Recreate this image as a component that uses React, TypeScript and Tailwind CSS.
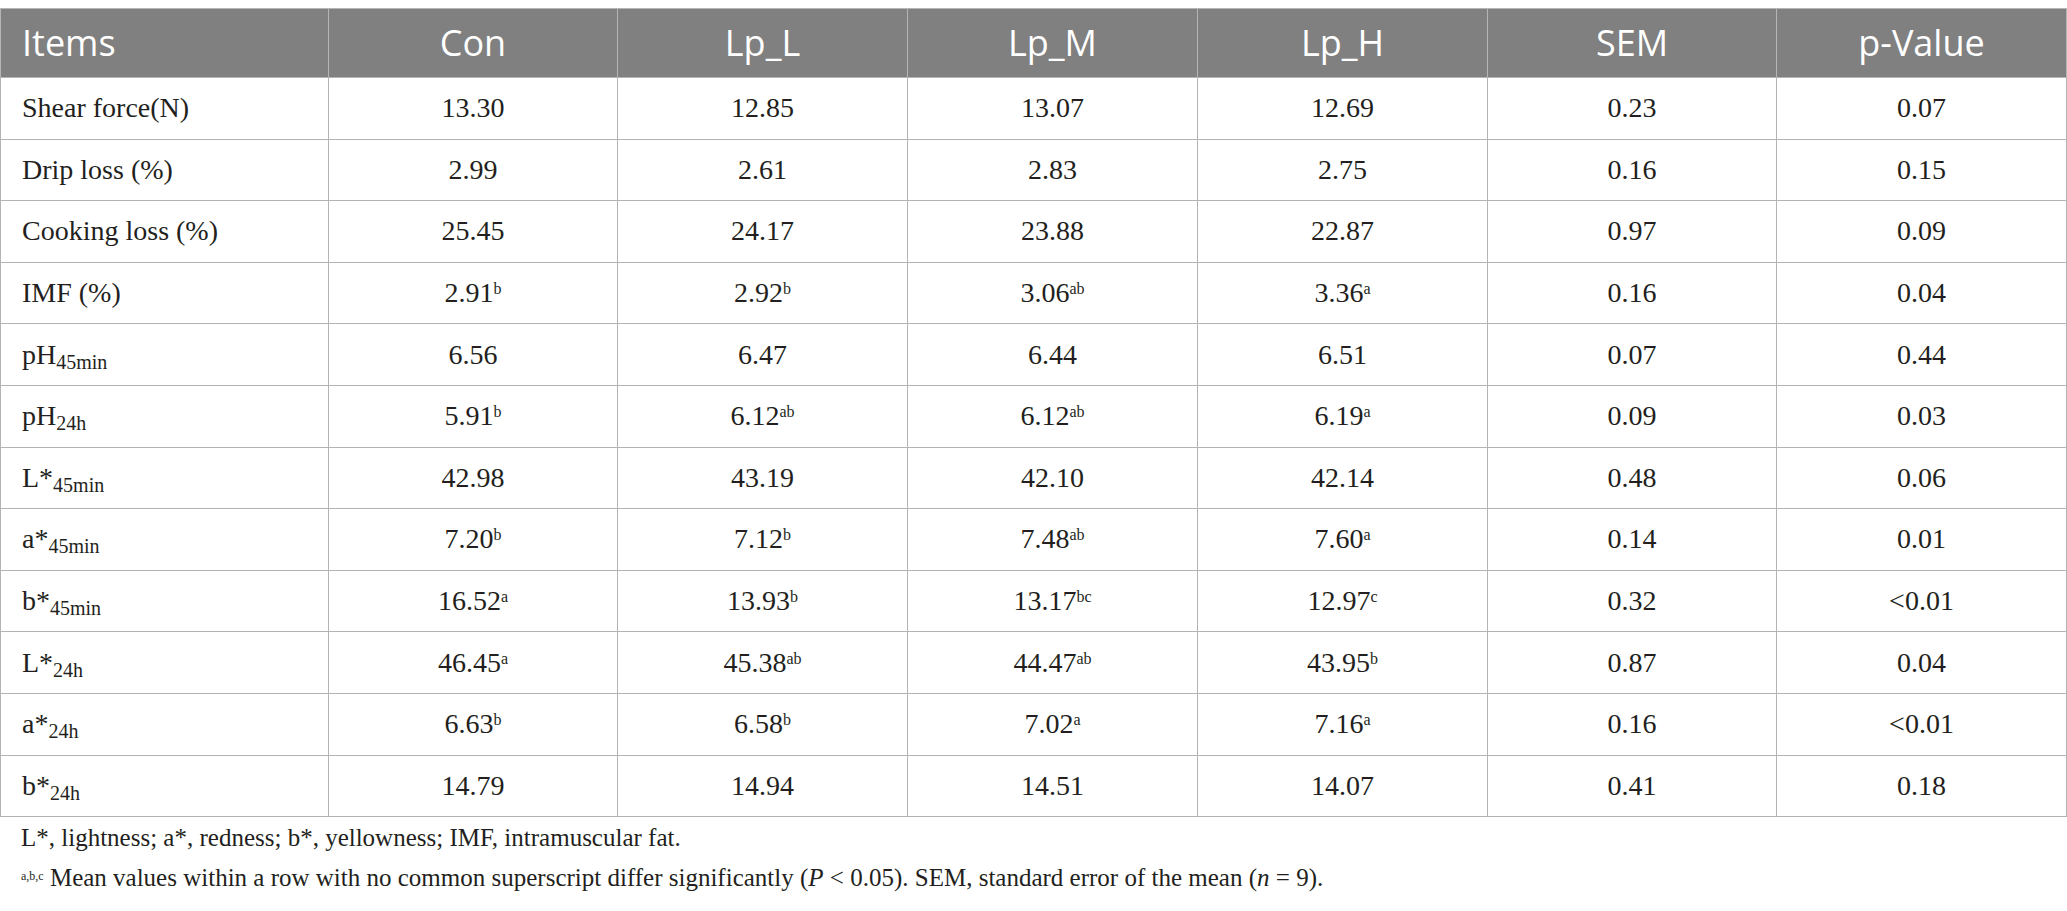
import React from 'react';

type Cell = { v: string; sup?: string };

interface Row {
  label: string;
  sub?: string;
  cells: Cell[];
}

const c = (v: string, sup?: string): Cell => ({ v, sup });

const rows: Row[] = [
  { label: 'Shear force(N)', cells: [c('13.30'), c('12.85'), c('13.07'), c('12.69'), c('0.23'), c('0.07')] },
  { label: 'Drip loss (%)', cells: [c('2.99'), c('2.61'), c('2.83'), c('2.75'), c('0.16'), c('0.15')] },
  { label: 'Cooking loss (%)', cells: [c('25.45'), c('24.17'), c('23.88'), c('22.87'), c('0.97'), c('0.09')] },
  { label: 'IMF (%)', cells: [c('2.91', 'b'), c('2.92', 'b'), c('3.06', 'ab'), c('3.36', 'a'), c('0.16'), c('0.04')] },
  { label: 'pH', sub: '45min', cells: [c('6.56'), c('6.47'), c('6.44'), c('6.51'), c('0.07'), c('0.44')] },
  { label: 'pH', sub: '24h', cells: [c('5.91', 'b'), c('6.12', 'ab'), c('6.12', 'ab'), c('6.19', 'a'), c('0.09'), c('0.03')] },
  { label: 'L*', sub: '45min', cells: [c('42.98'), c('43.19'), c('42.10'), c('42.14'), c('0.48'), c('0.06')] },
  { label: 'a*', sub: '45min', cells: [c('7.20', 'b'), c('7.12', 'b'), c('7.48', 'ab'), c('7.60', 'a'), c('0.14'), c('0.01')] },
  { label: 'b*', sub: '45min', cells: [c('16.52', 'a'), c('13.93', 'b'), c('13.17', 'bc'), c('12.97', 'c'), c('0.32'), c('<0.01')] },
  { label: 'L*', sub: '24h', cells: [c('46.45', 'a'), c('45.38', 'ab'), c('44.47', 'ab'), c('43.95', 'b'), c('0.87'), c('0.04')] },
  { label: 'a*', sub: '24h', cells: [c('6.63', 'b'), c('6.58', 'b'), c('7.02', 'a'), c('7.16', 'a'), c('0.16'), c('<0.01')] },
  { label: 'b*', sub: '24h', cells: [c('14.79'), c('14.94'), c('14.51'), c('14.07'), c('0.41'), c('0.18')] },
];

const headers = ['Con', 'Lp_L', 'Lp_M', 'Lp_H', 'SEM', 'p-Value'];

const serif = "font-['Liberation_Serif','Times_New_Roman',serif]";

export default function App() {
  return (
    <div className="bg-white w-[2067px] h-[911px] pt-[8px] text-[#231f20]">
      <table className="table-fixed border-collapse w-[2066px]">
        <colgroup>
          <col className="w-[328px]" />
          <col className="w-[289px]" />
          <col className="w-[290px]" />
          <col className="w-[290px]" />
          <col className="w-[290px]" />
          <col className="w-[289px]" />
          <col className="w-[290px]" />
        </colgroup>
        <thead>
          <tr className="h-[69px] bg-[#808080] font-['Open_Sans','Noto_Sans',sans-serif] text-[36px] text-white font-normal">
            <th className="border border-[#b5b5b5] text-left pl-[21px] font-normal">Items</th>
            {headers.map((h) => (
              <th key={h} className="border border-[#b5b5b5] text-center font-normal">
                {h}
              </th>
            ))}
          </tr>
        </thead>
        <tbody className={`${serif} text-[28px]`}>
          {rows.map((r, i) => (
            <tr key={i} className="h-[61.6px]">
              <td className="border border-[#b3b3b3] pl-[21px] text-left">
                {r.label}
                {r.sub && <sub className="text-[20px]">{r.sub}</sub>}
              </td>
              {r.cells.map((cell, j) => (
                <td key={j} className="border border-[#b3b3b3] text-center">
                  {cell.v}
                  {cell.sup && <sup className="text-[16px]">{cell.sup}</sup>}
                </td>
              ))}
            </tr>
          ))}
        </tbody>
      </table>

      {/* footnotes */}
      <div className={`${serif} text-[25px] leading-[40px] pt-[1px] pl-[21px]`}>
        <p>L*, lightness; a*, redness; b*, yellowness; IMF, intramuscular fat.</p>
        <p>
          <sup className="text-[12px]">a,b,c</sup> Mean values within a row with no common superscript differ
          significantly (<i>P</i> &lt; 0.05). SEM, standard error of the mean (<i>n</i> = 9).
        </p>
      </div>
    </div>
  );
}
